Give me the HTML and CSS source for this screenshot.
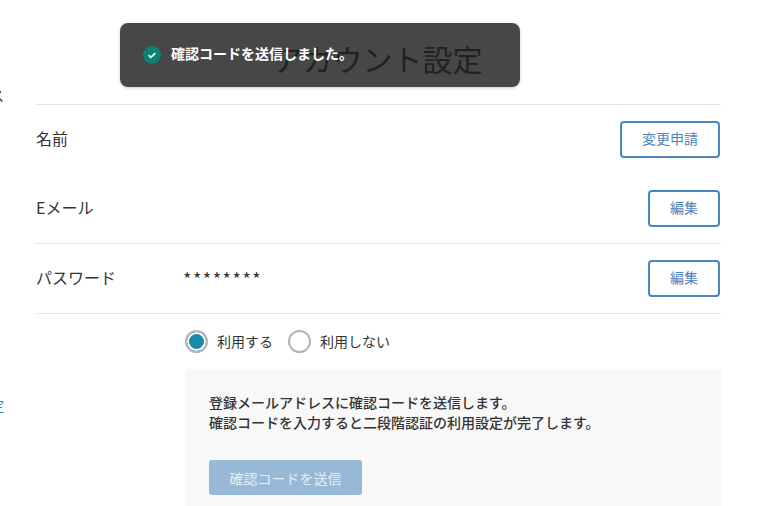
FILE: index.html
```html
<!DOCTYPE html>
<html lang="ja">
<head>
  <meta charset="UTF-8" />
  <title>アカウント設定</title>
  <link rel="stylesheet" href="styles.css">
</head>
<body>

  <div class="side">
    <div class="side-item side-top">メニュース</div>
    <div class="side-item side-link">二段階認証設定</div>
  </div>

  <div class="toast">
    <span class="toast-icon">
      <svg width="18" height="18" viewBox="0 0 18 18">
        <circle cx="9" cy="9" r="9" fill="#0b8273"/>
        <path d="M5.6 9.1l2.3 2.2 4.4-4.2" fill="none" stroke="#fff" stroke-width="1.6"/>
      </svg>
    </span>
    <span class="toast-text">確認コードを送信しました。</span>
  </div>

  <div class="main">
    <h1>アカウント設定</h1>

    <div class="group">
      <div class="row">
        <div class="label">名前</div>
        <div class="value"></div>
        <button class="btn btn-wide">変更申請</button>
      </div>
      <div class="row">
        <div class="label">Eメール</div>
        <div class="value"></div>
        <button class="btn">編集</button>
      </div>
    </div>

    <div class="group">
      <div class="row">
        <div class="label">パスワード</div>
        <div class="value stars">********</div>
        <button class="btn">編集</button>
      </div>
    </div>

    <div class="two-step">
      <div class="radios">
        <label class="radio"><span class="dot on"></span><span class="radio-text">利用する</span></label>
        <label class="radio"><span class="dot"></span><span class="radio-text">利用しない</span></label>
      </div>
      <div class="panel">
        <p>登録メールアドレスに確認コードを送信します。<br>確認コードを入力すると二段階認証の利用設定が完了します。</p>
        <button class="send" disabled>確認コードを送信</button>
      </div>
    </div>
  </div>

</body>
</html>
```

FILE: styles.css
```css
* {
  box-sizing: border-box;
}

html, body {
  margin: 0;
  padding: 0;
  height: 506px;
  overflow: hidden;
  background: #fff;
  color: #333;
  font-family: "Noto Sans CJK JP", "Liberation Sans", sans-serif;
}

/* sidebar is pushed almost fully off the left edge */
.side-item {
  position: absolute;
  right: calc(100% - 4px);
  white-space: nowrap;
  font-size: 14px;
  line-height: 20px;
}

.side-top {
  top: 85px;
}

.side-link {
  top: 395px;
  color: #1a8aa8;
}

.main {
  margin-left: 36px;
  width: 685px;
}

h1 {
  margin: 0;
  height: 104px;
  padding-top: 35px;
  padding-right: 2px;
  text-align: center;
  font-size: 30px;
  line-height: 46px;
  font-weight: 400;
  color: #777;
}

.toast {
  position: absolute;
  left: 120px;
  top: 23px;
  width: 400px;
  height: 64px;
  padding: 0 23px;
  display: flex;
  align-items: center;
  gap: 10px;
  background: rgba(0, 0, 0, 0.72);
  border-radius: 8px;
  box-shadow: 0 1px 3px rgba(0, 0, 0, 0.2);
  color: #fff;
  font-size: 14px;
  font-weight: 700;
}

.toast-icon {
  display: flex;
}

.toast-text {
  margin-bottom: 5px;
}

.group {
  border-top: 1px solid #e3e3e3;
  padding: 16px 0;
  display: flex;
  flex-direction: column;
  gap: 32px;
}

.row {
  display: flex;
  align-items: center;
  padding-right: 1px;
  height: 37px;
}

.label {
  width: 147px;
  margin-bottom: 4px;
  font-size: 16px;
  color: #333;
}

.value {
  flex: 1;
}

.stars {
  font-size: 18px;
  line-height: 24px;
  letter-spacing: 1.5px;
  margin-bottom: 2px;
}

.btn {
  width: 72px;
  height: 37px;
  padding: 0 0 3px;
  background: #fff;
  border: 2px solid #4a86bb;
  border-radius: 4px;
  color: #4a86bb;
  font: inherit;
  font-size: 14px;
}

.btn-wide {
  width: 100px;
}

.two-step {
  border-top: 1px solid #e3e3e3;
  padding-left: 149px;
}

.radios {
  display: flex;
  align-items: center;
  gap: 15px;
  height: 55px;
}

.radio {
  display: flex;
  align-items: center;
  gap: 9px;
  font-size: 14px;
}

.radio-text {
  margin-bottom: 2px;
}

.dot {
  width: 23px;
  height: 23px;
  border: 2px solid #b5b5b5;
  border-radius: 50%;
  background: #fff;
}

.dot.on {
  background: #1a8aa8;
  box-shadow: inset 0 0 0 2px #fff;
}

.panel {
  background: #f8f8f8;
  height: 137px;
  padding: 23px 24px;
}

.panel p {
  margin: 0 0 28px;
  font-size: 14px;
  line-height: 20px;
  font-weight: 500;
}

.send {
  display: block;
  width: 153px;
  height: 35px;
  padding: 0;
  background: #98b8d8;
  border: none;
  border-radius: 3px;
  color: #e6eef5;
  font: inherit;
  font-size: 14px;
}
```
